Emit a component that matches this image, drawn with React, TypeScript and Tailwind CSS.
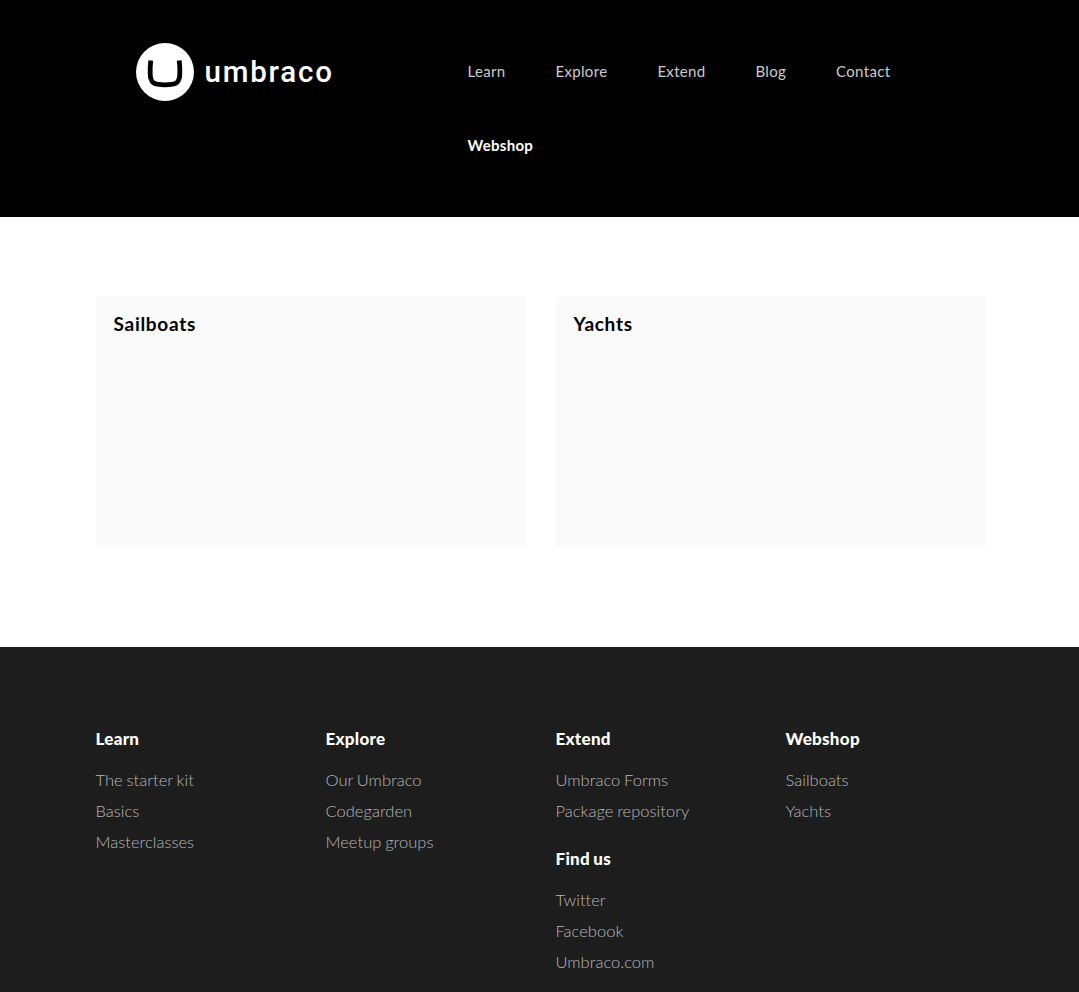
const nav = [
  { label: "Learn" },
  { label: "Explore" },
  { label: "Extend" },
  { label: "Blog" },
  { label: "Contact" },
  { label: "Webshop", active: true },
];

type Group = { title: string; links: string[] };

const columns: Group[][] = [
  [{ title: "Learn", links: ["The starter kit", "Basics", "Masterclasses"] }],
  [{ title: "Explore", links: ["Our Umbraco", "Codegarden", "Meetup groups"] }],
  [
    { title: "Extend", links: ["Umbraco Forms", "Package repository"] },
    { title: "Find us", links: ["Twitter", "Facebook", "Umbraco.com"] },
  ],
  [{ title: "Webshop", links: ["Sailboats", "Yachts"] }],
];

function Logo() {
  return (
    <div className="flex items-center text-white">
      <svg width="58" height="58" viewBox="0 0 58 58" className="shrink-0">
        <circle cx="29" cy="29" r="29" fill="#fff" />
        <path
          d="M14.800 17.500C14.200 22 14 26 14.200 31C14.500 39.500 17 41.800 29 41.800S43.500 39.500 43.800 31C44 26 43.800 22 43.200 17.500"
          fill="none"
          stroke="#000"
          strokeWidth="4.800"
        />
      </svg>
      <span className="ml-[11px] h-[58px] font-['Roboto',sans-serif] text-[29.5px] leading-[59px] font-medium tracking-[1.8px]">
        umbraco
      </span>
    </div>
  );
}

export default function App() {
  return (
    <div className="flex h-[992px] flex-col overflow-hidden bg-white font-['Lato',sans-serif]">
      <header className="flex h-[217px] shrink-0 bg-black">
        <div className="w-[467.5px] shrink-0 pt-[43px] pl-[135.5px]">
          <Logo />
        </div>
        <nav className="flex w-[470px] flex-wrap content-start gap-x-[50px] pt-[34px]">
          {nav.map((n) => (
            <a
              key={n.label}
              className={
                n.active
                  ? "h-[74px] text-[15px] leading-[74px] font-bold tracking-[0.3px] text-white"
                  : "h-[74px] text-[15px] leading-[74px] tracking-[0.32px] text-[#ccc]"
              }
            >
              {n.label}
            </a>
          ))}
        </nav>
      </header>
      <main className="flex h-[430px] shrink-0 gap-[30px] px-[96px] pt-20">
        {["Sailboats", "Yachts"].map((t) => (
          <section key={t} className="h-[250px] w-[430px] shrink-0 bg-[#fafafa] px-[17.5px] pt-[13px]">
            <h2 className="text-[19px] leading-7 font-bold tracking-[0.72px] text-black">{t}</h2>
          </section>
        ))}
      </main>
      <footer className="flex grow bg-[#1d1d1e] pt-[77px] pl-[95.5px]">
        {columns.map((groups, i) => (
          <div key={i} className="w-[230px] shrink-0">
            {groups.map((g) => (
              <div key={g.title} className="mb-[-3px]">
                <h3 className="h-[41px] text-[17px] leading-[30px] font-black tracking-[0.28px] text-white [word-spacing:-1px]">
                  {g.title}
                </h3>
                <ul className="pb-5">
                  {g.links.map((l) => (
                    <li
                      key={l}
                      className="h-[31px] text-[16.500px] leading-[31px] font-light tracking-[0.02px] text-[#b8b8b8] [word-spacing:-0.700px]"
                    >
                      {l}
                    </li>
                  ))}
                </ul>
              </div>
            ))}
          </div>
        ))}
      </footer>
    </div>
  );
}
